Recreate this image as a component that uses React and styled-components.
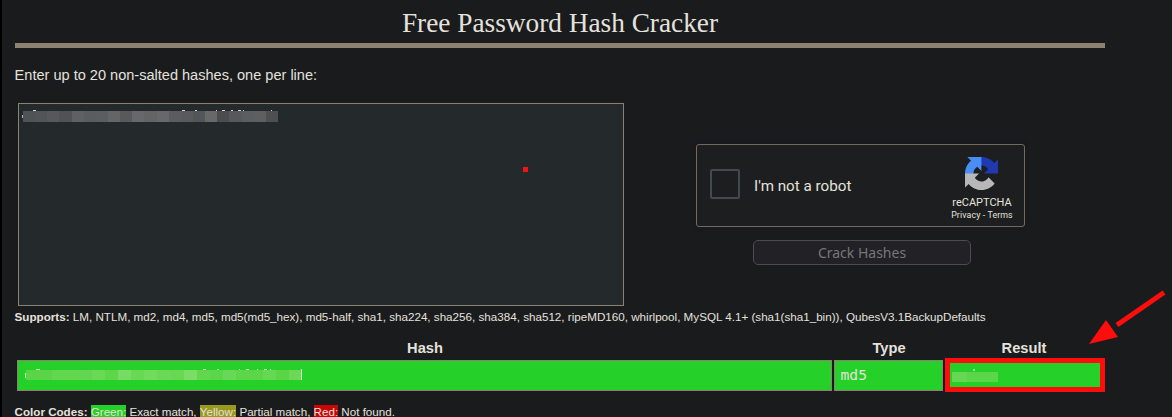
import React from "react";
import styled, { createGlobalStyle } from "styled-components";

const Global = createGlobalStyle`
  * { box-sizing: border-box; }
  html, body { margin: 0; background: #1a1b1d; overflow: hidden; }
`;

const Page = styled.main`
  position: relative;
  width: 1172px;
  height: 417px;
  padding-left: 13px;
  border-left: 2px solid #000;
  overflow: hidden;
  background: #1a1b1d;
  color: #e5e2dd;
  font-family: "Liberation Sans", Arial, sans-serif;
`;

const Content = styled.div`
  width: 1090px;
`;

const Title = styled.h1`
  margin: 0;
  height: 48px;
  padding-top: 7px;
  border-bottom: 5px solid #8e8272;
  font: 400 27.3px/32px "Liberation Serif", "Times New Roman", serif;
  text-align: center;
  white-space: nowrap;
`;

const Intro = styled.p`
  margin: 18px 0 0 -0.4px;
  height: 37px;
  font-size: 14.56px;
  line-height: 18px;
`;

const FormRow = styled.div`
  display: flex;
  padding-left: 3px;
`;

const HashInput = styled.div`
  width: 606px;
  height: 203px;
  padding: 7px 0 0 4px;
  border: 1px solid #8c8271;
  background: #24292c;
`;

const Side = styled.div`
  display: flex;
  flex-direction: column;
  align-items: center;
  width: 329px;
  margin: 41px 0 0 72px;
`;

const Captcha = styled.div`
  display: flex;
  align-items: center;
  width: 329px;
  height: 83px;
  padding-left: 13px;
  border: 1px solid #736a5e;
  border-radius: 3px;
  background: #1c1e1f;
  box-shadow: 0 0 4px rgba(28, 24, 38, 0.8);
  font-family: Roboto, sans-serif;
`;

const CheckBox = styled.span`
  width: 30px;
  height: 30px;
  margin-top: -4px;
  border: 2px solid #434a4b;
  border-radius: 2px;
`;

const CaptchaLabel = styled.span`
  flex: 1;
  margin-left: 14px;
  font-size: 15.2px;
  line-height: 18px;
`;

const Brand = styled.div`
  display: flex;
  flex-direction: column;
  align-items: center;
  align-self: flex-start;
  width: 84px;
  padding-top: 12px;
  white-space: nowrap;
`;

const BrandLogo = styled.svg`
  width: 33px;
  height: 33px;
  margin-right: 1.5px;
`;

const BrandName = styled.span`
  margin-top: 7px;
  font-size: 11px;
  line-height: 12px;
`;

const BrandLinks = styled.span`
  margin-top: 1px;
  font-size: 8.8px;
  letter-spacing: 0.12px;
  line-height: 11px;
`;

const CrackButton = styled.button`
  width: 218px;
  height: 25px;
  margin: 13px 0 0 3px;
  padding: 0;
  border: 1px solid #4c4b50;
  border-radius: 5px;
  background: #222126;
  color: #77767b;
  font: 400 14px/22px "Noto Sans", sans-serif;
`;

const Note = styled.p`
  margin: ${(p) => p.$top}px 0 0 -0.4px;
  font-size: ${(p) => p.$size || 11.65}px;
  line-height: 14px;
  white-space: nowrap;
`;

const Results = styled.div`
  display: grid;
  grid-template-columns: 815px 109px 157px;
  grid-template-rows: 20px 31px;
  column-gap: 2px;
  row-gap: 2px;
  margin: 14px 0 0 2px;
`;

const Head = styled.div`
  padding-left: 1px;
  font-weight: 700;
  font-size: 14.67px;
  line-height: 20px;
  text-align: center;
`;

const Cell = styled.div`
  display: flex;
  padding: ${(p) => p.$pad || "9px 0 0 8px"};
  border: 1px solid #8c8271;
  background: #25d028;
  font: 14.67px/12px "DejaVu Sans Mono", monospace;
`;

const Mask = styled.div`
  position: relative;
  display: flex;
  width: ${(p) => p.$w}px;
  height: ${(p) => p.$h}px;
`;

const Block = styled.span`
  flex: 1;
  background: ${(p) => p.$c};
`;

const Speck = styled.span`
  position: absolute;
  left: ${(p) => p.$x}px;
  top: ${(p) => p.$y}px;
  width: ${(p) => p.$w}px;
  height: ${(p) => p.$h}px;
  background: rgba(240, 240, 235, ${(p) => p.$o || 0.85});
`;

const Tag = styled.span`
  display: inline-block;
  height: 14px;
  background: ${(p) => p.$c};
`;

const Dot = styled.span`
  position: absolute;
  left: 521px;
  top: 167px;
  width: 5px;
  height: 5px;
  background: #f51212;
`;

const Highlight = styled.div`
  position: absolute;
  left: 942.5px;
  top: 357.5px;
  width: 160px;
  height: 34px;
  border: 5px solid #ff0c0c;
`;

const Arrow = styled.svg`
  position: absolute;
  left: 1082px;
  top: 288px;
  width: 86px;
  height: 60px;
`;

const greys = ["#4f5355", "#515557", "#575859", "#4f5355", "#606064", "#595d5f", "#5a5e60", "#656566", "#59595d", "#68686a", "#646465", "#68686c", "#5b5b60", "#595a5c", "#515759", "#686869", "#4c4c50", "#575859", "#5b5e61", "#5e5f60", "#4f4f52"];
const greens = ["#5bd547", "#5bd547", "#63d74f", "#63d74f", "#63d651", "#6bd956", "#5fd549", "#76dc63", "#69d855", "#73da60", "#6bd857", "#68d854", "#7bdc68", "#62d64d", "#5cd548", "#69d856", "#5dd64a", "#5cd547", "#67d853", "#5bd547", "#6cd858"];

function Masked({ width, height, colors, specks }) {
  return (
    <Mask $w={width} $h={height}>
      {colors.map((c, i) => <Block key={i} $c={c} />)}
      {specks.map(([x, y, w, h, o], i) => <Speck key={i} $x={x} $y={y} $w={w} $h={h} $o={o} />)}
    </Mask>
  );
}

export default function App() {
  return (
    <Page>
      <Global />
      <Content>
        <Title>Free Password Hash Cracker</Title>
        <Intro>Enter up to 20 non-salted hashes, one per line:</Intro>
        <FormRow>
          <HashInput>
            <Masked width={255} height={11} colors={greys} specks={[[-1, 4, 1, 3, 0.7], [10, -1, 3, 1], [159, -1, 3, 1], [172, -1, 2, 1], [193, -1, 1, 1], [199, -1, 3, 1], [208, -1, 2, 1], [215, -1, 3, 1], [220, -1, 1, 1], [248, -1, 1, 1]]} />
          </HashInput>
          <Side>
            <Captcha>
              <CheckBox />
              <CaptchaLabel>I'm not a robot</CaptchaLabel>
              <Brand>
                <BrandLogo viewBox="0 0 64 64">
                  <path fill="#2039b0" d="M64 31.955l-.033-1.37V4.687l-7.16 7.16C50.948 4.674 42.033.093 32.05.093c-10.39 0-19.622 4.96-25.458 12.64l11.736 11.86a15.55 15.55 0 0 1 4.754-5.334c2.05-1.6 4.952-2.906 8.968-2.906.485 0 .86.057 1.135.163 4.976.393 9.288 3.14 11.828 7.124l-8.307 8.307L64 31.953" />
                  <path fill="#4a8df5" d="M31.862.094l-1.37.033H4.594l7.16 7.16C4.58 13.147 0 22.06 0 32.046c0 10.39 4.96 19.622 12.64 25.458L24.5 45.768a15.55 15.55 0 0 1-5.334-4.754c-1.6-2.05-2.906-4.952-2.906-8.968 0-.485.057-.86.163-1.135.393-4.976 3.14-9.288 7.124-11.828l8.307 8.307L31.86.095" />
                  <path fill="#b8b8b8" d="M.001 32.045l.033 1.37v25.898l7.16-7.16c5.86 7.173 14.774 11.754 24.76 11.754 10.39 0 19.622-4.96 25.458-12.64l-11.736-11.86a15.55 15.55 0 0 1-4.754 5.334c-2.05 1.6-4.952 2.906-8.968 2.906-.485 0-.86-.057-1.135-.163-4.976-.393-9.288-3.14-11.828-7.124l8.307-8.307c-10.522.04-22.4.066-27.295-.005" />
                </BrandLogo>
                <BrandName>reCAPTCHA</BrandName>
                <BrandLinks>Privacy - Terms</BrandLinks>
              </Brand>
            </Captcha>
            <CrackButton>Crack Hashes</CrackButton>
          </Side>
        </FormRow>
        <Note $top={4}>
          <b>Supports:</b> LM, NTLM, md2, md4, md5, md5(md5_hex), md5-half, sha1, sha224, sha256, sha384, sha512, ripeMD160, whirlpool, MySQL 4.1+ (sha1(sha1_bin)), QubesV3.1BackupDefaults
        </Note>
        <Results>
          <Head>Hash</Head>
          <Head>Type</Head>
          <Head>Result</Head>
          <Cell>
            <Masked width={276} height={10} colors={greens} specks={[[-1, 3, 1, 5], [10, -1, 4, 1], [177, -1, 3, 1], [191, -1, 2, 1, 0.6], [213, -1, 1, 1], [220, -1, 3, 1], [231, -1, 1, 1], [238, -1, 3, 1], [244, -1, 1, 1], [275, -1, 1, 11]]} />
          </Cell>
          <Cell $pad="8px 0 0 5.5px">md5</Cell>
          <Cell $pad="11px 0 0 6px">
            <Masked width={46} height={10} colors={["#66d753", "#5bd649", "#5bd647"]} specks={[[21, -3, 2, 2, 0.6]]} />
          </Cell>
        </Results>
        <Note $top={14} $size={11.62}>
          <b>Color Codes:</b> <Tag $c="#25d028">Green:</Tag> Exact match, <Tag $c="#99981f">Yellow:</Tag> Partial match, <Tag $c="#c90606">Red:</Tag> Not found.
        </Note>
      </Content>
      <Dot />
      <Highlight />
      <Arrow viewBox="0 0 86 60">
        <path d="M80 4.5 33 37" stroke="#ff0c0c" strokeWidth="5" />
        <path d="M5 56 22 32 34 49Z" fill="#ff0c0c" />
      </Arrow>
    </Page>
  );
}
